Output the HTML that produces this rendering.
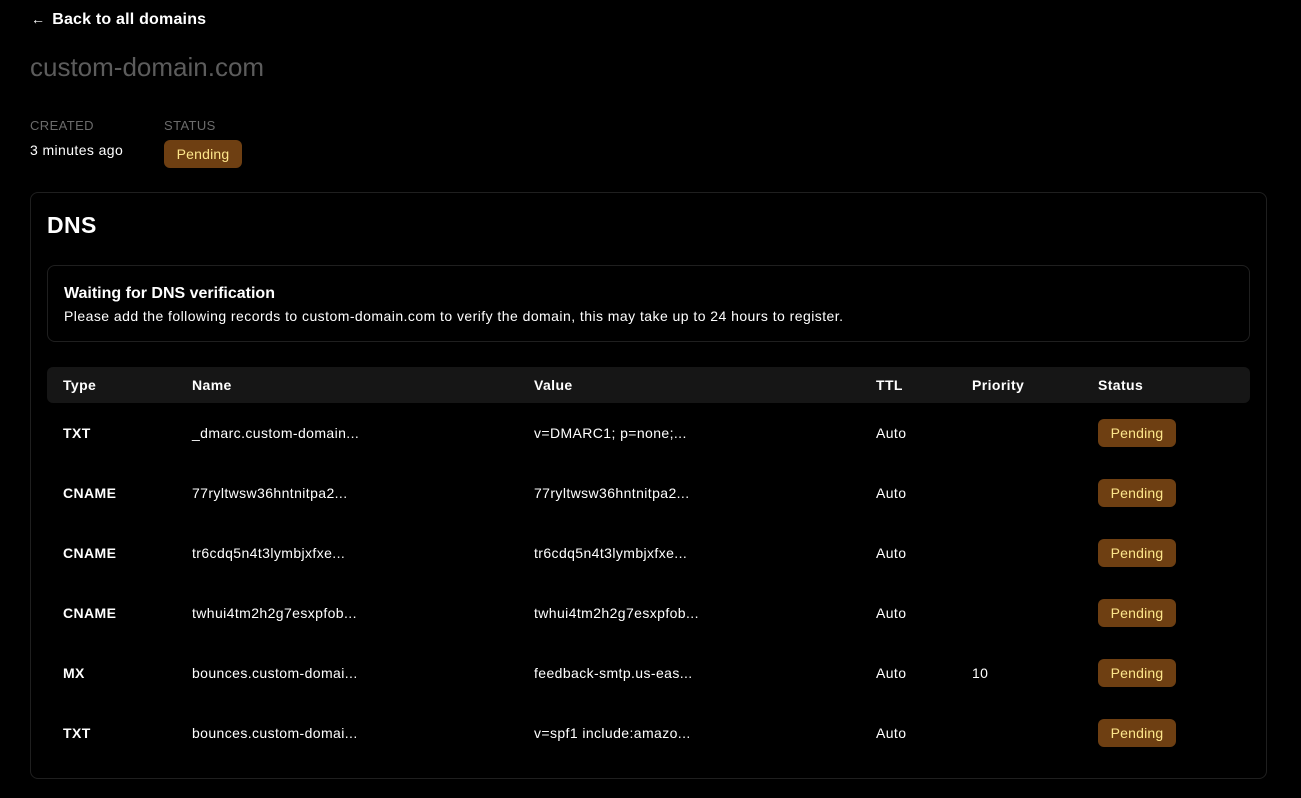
<!DOCTYPE html>
<html><head><meta charset="utf-8"><style>
*{box-sizing:border-box;margin:0;padding:0}
body{width:1301px;height:798px;background:#000;color:#fff;font-family:"Liberation Sans",Arial,sans-serif;position:relative;overflow:hidden;letter-spacing:0.4px}
.abs{position:absolute}
.badge{position:absolute;background:#6e3f12;color:#fde68a;font-size:14px;border-radius:6px;width:78px;height:28px;line-height:28px;text-align:center;letter-spacing:0.2px}
.card{position:absolute;left:30px;top:192px;width:1237px;height:587px;border:1px solid #1f1f1f;border-radius:8px;background:#000}
.row{position:absolute;left:47px;width:1203px;height:36px;font-size:14px}
.row span{position:absolute;top:0;line-height:36px}
.hdr{background:#161616;border-radius:6px;font-weight:bold}
.b{font-weight:bold}
</style></head><body>
<div class="abs" style="left:31px;top:9px;font-size:16px;font-weight:bold;line-height:20px;letter-spacing:0.2px"><span style="font-weight:normal;margin-right:7px;font-size:14px">←</span>Back to all domains</div>
<div class="abs" style="left:30px;top:52px;font-size:26px;color:#5c5c5c;line-height:30px;letter-spacing:0">custom-domain.com</div>
<div class="abs" style="left:30px;top:118px;font-size:13px;color:#6b6b6b">CREATED</div>
<div class="abs" style="left:30px;top:142px;font-size:14px">3 minutes ago</div>
<div class="abs" style="left:164px;top:118px;font-size:13px;color:#6b6b6b">STATUS</div>
<div class="badge" style="left:164px;top:140px">Pending</div>
<div class="card"></div>
<div class="abs" style="left:47px;top:210px;font-size:23px;font-weight:bold;line-height:30px">DNS</div>
<div class="abs" style="left:47px;top:265px;width:1203px;height:77px;border:1px solid #1f1f1f;border-radius:8px"></div>
<div class="abs" style="left:64px;top:285px;font-size:16px;font-weight:bold;letter-spacing:0">Waiting for DNS verification</div>
<div class="abs" style="left:64px;top:308px;font-size:14px;letter-spacing:0.45px">Please add the following records to custom-domain.com to verify the domain, this may take up to 24 hours to register.</div>
<div class="row hdr" style="top:367px"><span style="left:16px">Type</span><span style="left:145px">Name</span><span style="left:487px">Value</span><span style="left:829px">TTL</span><span style="left:925px">Priority</span><span style="left:1051px">Status</span></div>
<div class="row" style="top:415px"><span class="b" style="left:16px">TXT</span><span style="left:145px">_dmarc.custom-domain...</span><span style="left:487px">v=DMARC1; p=none;...</span><span style="left:829px">Auto</span></div>
<div class="row" style="top:475px"><span class="b" style="left:16px">CNAME</span><span style="left:145px">77ryltwsw36hntnitpa2...</span><span style="left:487px">77ryltwsw36hntnitpa2...</span><span style="left:829px">Auto</span></div>
<div class="row" style="top:535px"><span class="b" style="left:16px">CNAME</span><span style="left:145px">tr6cdq5n4t3lymbjxfxe...</span><span style="left:487px">tr6cdq5n4t3lymbjxfxe...</span><span style="left:829px">Auto</span></div>
<div class="row" style="top:595px"><span class="b" style="left:16px">CNAME</span><span style="left:145px">twhui4tm2h2g7esxpfob...</span><span style="left:487px">twhui4tm2h2g7esxpfob...</span><span style="left:829px">Auto</span></div>
<div class="row" style="top:655px"><span class="b" style="left:16px">MX</span><span style="left:145px">bounces.custom-domai...</span><span style="left:487px">feedback-smtp.us-eas...</span><span style="left:829px">Auto</span><span style="left:925px">10</span></div>
<div class="row" style="top:715px"><span class="b" style="left:16px">TXT</span><span style="left:145px">bounces.custom-domai...</span><span style="left:487px">v=spf1 include:amazo...</span><span style="left:829px">Auto</span></div>
<div class="badge" style="left:1098px;top:419px">Pending</div>
<div class="badge" style="left:1098px;top:479px">Pending</div>
<div class="badge" style="left:1098px;top:539px">Pending</div>
<div class="badge" style="left:1098px;top:599px">Pending</div>
<div class="badge" style="left:1098px;top:659px">Pending</div>
<div class="badge" style="left:1098px;top:719px">Pending</div>
</body></html>
